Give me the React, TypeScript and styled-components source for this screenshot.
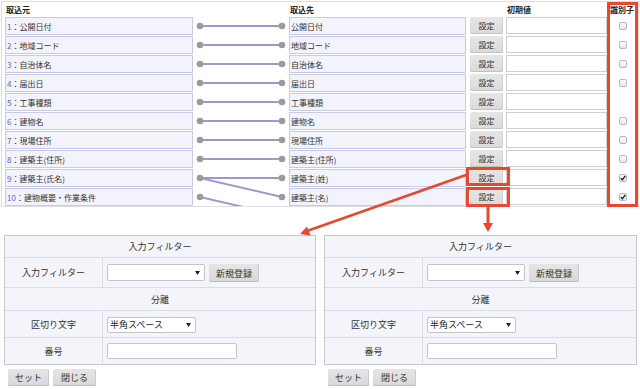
import React from "react";
import styled, { createGlobalStyle } from "styled-components";

const GlobalStyle = createGlobalStyle`
  html, body { margin: 0; padding: 0; background: #fff; }
  body { font-family: "Noto Sans CJK JP", "Noto Sans", sans-serif; color: #333; }
  * { box-sizing: border-box; }
`;

const Page = styled.div`
  position: relative;
  width: 640px;
  height: 389px;
  overflow: hidden;
`;

const MappingPanel = styled.section`
  margin: 1px 1px 0 1px;
  border: 1px solid #dedede;
  padding: 0 0 0 3px;
  height: 206px;
  display: grid;
  grid-template-columns: 188px 96px 177px 40px 101px 30px;
  grid-template-rows: 14px repeat(10, 18px);
  row-gap: 1px;
  overflow: hidden;
`;

const HeadLabel = styled.div<{ $col: number; $center?: boolean }>`
  grid-column: ${(p) => p.$col};
  grid-row: 1;
  font-size: 8px;
  font-weight: bold;
  color: #222;
  line-height: 14px;
  padding-top: 1px;
  padding-left: ${(p) => (p.$center ? "0" : "1px")};
  text-align: ${(p) => (p.$center ? "center" : "left")};
  white-space: nowrap;
`;

const FieldBox = styled.div<{ $col: number; $row: number }>`
  grid-column: ${(p) => p.$col};
  grid-row: ${(p) => p.$row};
  background: #f3f3fc;
  border: 1px solid #c9c9e8;
  font-size: 8px;
  color: #333;
  display: flex;
  align-items: center;
  padding-left: 1px;
  white-space: nowrap;
  overflow: hidden;
`;

const Num = styled.span`
  color: #5a64cc;
`;

const ConnectorArea = styled.svg`
  grid-column: 2;
  grid-row: 2 / span 10;
  display: block;
  overflow: hidden;
`;

const SetButton = styled.button<{ $row: number }>`
  grid-column: 4;
  grid-row: ${(p) => p.$row};
  justify-self: start;
  align-self: start;
  margin-left: 4px;
  width: 33px;
  height: 17px;
  padding: 0;
  border: none;
  border-radius: 2px;
  background: linear-gradient(#e6e6e6, #dadada);
  box-shadow: inset 0 -1px 0 #c2c2c2, inset -1px 0 0 #d0d0d0;
  font-family: inherit;
  font-size: 8px;
  color: #333;
`;

const InitInput = styled.input<{ $row: number }>`
  grid-column: 5;
  grid-row: ${(p) => p.$row};
  align-self: start;
  width: 101px;
  height: 17px;
  border: 1px solid #cfcfcf;
  background: #fff;
  padding: 0 2px;
  font-size: 8px;
`;

const CheckCell = styled.div<{ $row: number }>`
  grid-column: 6;
  grid-row: ${(p) => p.$row};
  display: flex;
  align-items: center;
  justify-content: center;
  padding-left: 1px;
`;

const CheckMark = styled.span`
  width: 8px;
  height: 8px;
  border: 1px solid #b8b8b8;
  border-radius: 2px;
  background: linear-gradient(#fbfbfb, #e8e8e8);
  display: flex;
  align-items: center;
  justify-content: center;
`;

const Highlight = styled.div<{ $x: number; $y: number; $w: number; $h: number }>`
  position: absolute;
  left: ${(p) => p.$x}px;
  top: ${(p) => p.$y}px;
  width: ${(p) => p.$w}px;
  height: ${(p) => p.$h}px;
  border: 3px solid #e8482e;
  pointer-events: none;
`;

const ArrowLayer = styled.svg`
  position: absolute;
  left: 0;
  top: 0;
  pointer-events: none;
`;

const FilterArea = styled.div`
  display: flex;
  gap: 8px;
  margin-top: 28px;
  padding-left: 4px;
`;

const FilterCard = styled.div<{ $w: number }>`
  width: ${(p) => p.$w}px;
`;

const FilterTable = styled.div`
  border: 1px solid #c7c7cf;
  background: #f4f4fb;
  display: grid;
  grid-template-columns: 98px 1fr;
`;

const TitleCell = styled.div<{ $h: number }>`
  grid-column: 1 / -1;
  height: ${(p) => p.$h}px;
  border-bottom: 1px solid #dcdce8;
  display: flex;
  align-items: center;
  justify-content: center;
  font-size: 9px;
  color: #333;
`;

const LabelCell = styled.div<{ $h: number; $last?: boolean }>`
  height: ${(p) => p.$h}px;
  border-right: 1px solid #dcdce8;
  border-bottom: ${(p) => (p.$last ? "none" : "1px solid #dcdce8")};
  display: flex;
  align-items: center;
  justify-content: center;
  font-size: 9px;
  color: #333;
`;

const ValueCell = styled.div<{ $h: number; $top: number; $last?: boolean }>`
  height: ${(p) => p.$h}px;
  border-bottom: ${(p) => (p.$last ? "none" : "1px solid #dcdce8")};
  padding: ${(p) => p.$top}px 0 0 4px;
  display: flex;
  align-items: flex-start;
  gap: 4px;
`;

const SelectWrap = styled.div<{ $w: number; $h: number }>`
  position: relative;
  width: ${(p) => p.$w}px;
  height: ${(p) => p.$h}px;
  font-size: 9px;
  line-height: 0;
`;

const FakeSelect = styled.select`
  appearance: none;
  -webkit-appearance: none;
  display: block;
  width: 100%;
  height: 100%;
  border: 1px solid #c4c4c4;
  border-radius: 2px;
  background: #fff;
  font-family: inherit;
  font-size: 9px;
  line-height: 14px;
  color: #222;
  padding: 0 0 0 2px;
  margin: 0;
  outline: none;
`;

const SelectCaret = styled.svg`
  position: absolute;
  right: 5px;
  top: 50%;
  margin-top: -2px;
  pointer-events: none;
`;

const SmallButton = styled.button<{ $w: number; $h: number }>`
  width: ${(p) => p.$w}px;
  height: ${(p) => p.$h}px;
  padding: 0;
  border: none;
  border-radius: 2px;
  background: linear-gradient(#e5e5e5, #d9d9d9);
  box-shadow: inset 0 -1px 0 #bcbcbc, inset -1px 0 0 #cacaca;
  font-family: inherit;
  font-size: 9px;
  color: #333;
`;

const TextField = styled.input<{ $w: number }>`
  display: block;
  width: ${(p) => p.$w}px;
  height: 16px;
  border: 1px solid #c4c4c4;
  border-radius: 2px;
  background: #fff;
  padding: 0 2px;
  margin: 0;
`;

const ActionRow = styled.div`
  display: flex;
  gap: 4px;
  margin-top: 4px;
  padding-left: 4px;
`;

const sources = [
  "公開日付",
  "地域コード",
  "自治体名",
  "届出日",
  "工事種類",
  "建物名",
  "現場住所",
  "建築主(住所)",
  "建築主(氏名)",
  "建物概要・作業条件",
];

const targets = [
  "公開日付",
  "地域コード",
  "自治体名",
  "届出日",
  "工事種類",
  "建物名",
  "現場住所",
  "建築主(住所)",
  "建築主(姓)",
  "建築主(名)",
];

// null = no checkbox, false = unchecked, true = checked
const identifiers: (boolean | null)[] = [false, false, false, false, null, false, false, false, true, true];

// [fromRowIndex, toRowIndex]
const links: [number, number][] = [
  [0, 0],
  [1, 1],
  [2, 2],
  [3, 3],
  [4, 4],
  [5, 5],
  [6, 6],
  [7, 7],
  [8, 8],
  [8, 9],
  [9, 10],
];

const rowY = (i: number) => i * 19 + 9;

function Connectors() {
  return (
    <ConnectorArea width={96} height={189} viewBox="0 0 96 189">
      {links.map(([a, b], k) => (
        <line
          key={k}
          x1={7}
          y1={rowY(a)}
          x2={89}
          y2={rowY(b)}
          stroke="#9a9ad3"
          strokeWidth={2}
        />
      ))}
      {sources.map((_, i) => (
        <circle key={"l" + i} cx={7} cy={rowY(i)} r={3.3} fill="#9b9b9b" />
      ))}
      {targets.map((_, i) => (
        <circle key={"r" + i} cx={89} cy={rowY(i)} r={3.3} fill="#9b9b9b" />
      ))}
    </ConnectorArea>
  );
}

function Caret() {
  return (
    <SelectCaret width={5} height={4} viewBox="0 0 5 4">
      <path d="M0 0 H5 L2.5 4 Z" fill="#222" />
    </SelectCaret>
  );
}

function FilterPanel({ width }: { width: number }) {
  return (
    <FilterCard $w={width}>
      <FilterTable>
        <TitleCell $h={22}>入力フィルター</TitleCell>
        <LabelCell $h={30}>入力フィルター</LabelCell>
        <ValueCell $h={30} $top={6}>
          <SelectWrap $w={98} $h={17}>
            <FakeSelect defaultValue="">
              <option value=""></option>
            </FakeSelect>
            <Caret />
          </SelectWrap>
          <SmallButton $w={50} $h={18}>新規登録</SmallButton>
        </ValueCell>
        <TitleCell $h={23}>分離</TitleCell>
        <LabelCell $h={27}>区切り文字</LabelCell>
        <ValueCell $h={27} $top={6}>
          <SelectWrap $w={89} $h={16}>
            <FakeSelect defaultValue="space">
              <option value="space">半角スペース</option>
            </FakeSelect>
            <Caret />
          </SelectWrap>
        </ValueCell>
        <LabelCell $h={26} $last>番号</LabelCell>
        <ValueCell $h={26} $top={5} $last>
          <TextField $w={130} />
        </ValueCell>
      </FilterTable>
      <ActionRow>
        <SmallButton $w={41} $h={17}>セット</SmallButton>
        <SmallButton $w={43} $h={17}>閉じる</SmallButton>
      </ActionRow>
    </FilterCard>
  );
}

export default function App() {
  return (
    <Page>
      <GlobalStyle />
      <MappingPanel>
        <HeadLabel $col={1}>取込元</HeadLabel>
        <HeadLabel $col={3}>取込先</HeadLabel>
        <HeadLabel $col={5}>初期値</HeadLabel>
        <HeadLabel $col={6} $center>
          識別子
        </HeadLabel>
        {sources.map((s, i) => (
          <FieldBox key={"s" + i} $col={1} $row={i + 2}>
            <Num>{i + 1}</Num>：{s}
          </FieldBox>
        ))}
        <Connectors />
        {targets.map((t, i) => (
          <FieldBox key={"t" + i} $col={3} $row={i + 2}>
            {t}
          </FieldBox>
        ))}
        {targets.map((_, i) => (
          <SetButton key={"b" + i} $row={i + 2}>
            設定
          </SetButton>
        ))}
        {targets.map((_, i) => (
          <InitInput key={"in" + i} $row={i + 2} />
        ))}
        {identifiers.map((v, i) =>
          v === null ? null : (
            <CheckCell key={"c" + i} $row={i + 2}>
              <CheckMark>
                {v && (
                  <svg width={6} height={6} viewBox="0 0 6 6">
                    <path d="M0.8 3.2 L2.4 4.8 L5.3 1" stroke="#222" strokeWidth={1.4} fill="none" />
                  </svg>
                )}
              </CheckMark>
            </CheckCell>
          )
        )}
      </MappingPanel>

      <FilterArea>
        <FilterPanel width={312} />
        <FilterPanel width={313} />
      </FilterArea>

      <Highlight $x={607} $y={2} $w={31} $h={205} />
      <Highlight $x={466} $y={167} $w={44} $h={19} />
      <Highlight $x={466} $y={187} $w={44} $h={20} />

      <ArrowLayer width={640} height={389} viewBox="0 0 640 389">
        <line x1={466} y1={175} x2={307} y2={231} stroke="#e8482e" strokeWidth={2.5} />
        <polygon points="300,234 310.5,235.5 307,226.5" fill="#e8482e" />
        <line x1={488} y1={207} x2={488} y2={225} stroke="#e8482e" strokeWidth={3} />
        <polygon points="483,223 493,223 488,232" fill="#e8482e" />
      </ArrowLayer>
    </Page>
  );
}
